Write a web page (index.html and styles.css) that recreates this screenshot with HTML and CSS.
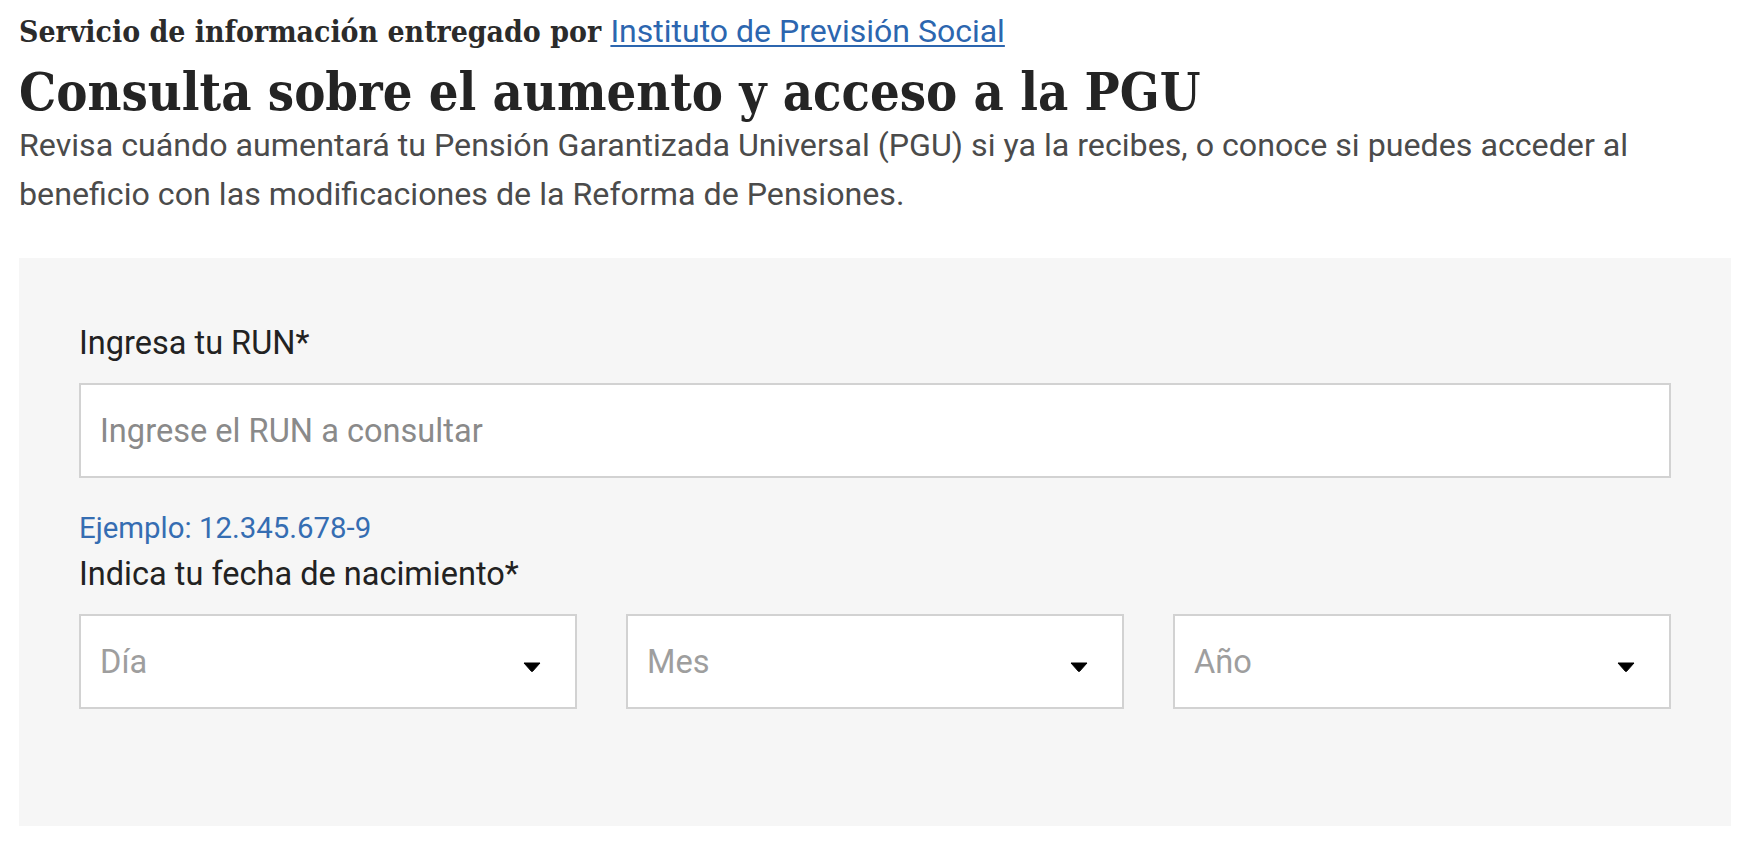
FILE: index.html
```html
<!DOCTYPE html>
<html lang="es">
<head>
<meta charset="utf-8">
<title>Consulta sobre el aumento y acceso a la PGU</title>
<link rel="stylesheet" href="styles.css">
</head>
<body>
<main class="page">
  <p class="provider">Servicio de información entregado por <a class="provider-link" href="#">Instituto de Previsión Social</a></p>
  <h1 class="title">Consulta sobre el aumento y acceso a la PGU</h1>
  <p class="lead">Revisa cuándo aumentará tu Pensión Garantizada Universal (PGU) si ya la recibes, o conoce si puedes acceder al beneficio con las modificaciones de la Reforma de Pensiones.</p>

  <form class="panel">
    <label class="label" for="run">Ingresa tu RUN*</label>
    <input class="field" id="run" type="text" placeholder="Ingrese el RUN a consultar">
    <p class="help">Ejemplo: 12.345.678-9</p>
    <p class="label label-date">Indica tu fecha de nacimiento*</p>
    <div class="date-row">
      <div class="select-wrap">
        <select class="select" aria-label="Día"><option selected>Día</option></select>
        <svg class="caret" viewBox="0 0 18 10" width="18" height="10" aria-hidden="true"><path d="M1 1 H17 L9.6 9.3 Q9 9.9 8.4 9.3 Z" fill="#000" stroke="#000" stroke-width="1" stroke-linejoin="round"/></svg>
      </div>
      <div class="select-wrap">
        <select class="select" aria-label="Mes"><option selected>Mes</option></select>
        <svg class="caret" viewBox="0 0 18 10" width="18" height="10" aria-hidden="true"><path d="M1 1 H17 L9.6 9.3 Q9 9.9 8.4 9.3 Z" fill="#000" stroke="#000" stroke-width="1" stroke-linejoin="round"/></svg>
      </div>
      <div class="select-wrap">
        <select class="select" aria-label="Año"><option selected>Año</option></select>
        <svg class="caret" viewBox="0 0 18 10" width="18" height="10" aria-hidden="true"><path d="M1 1 H17 L9.6 9.3 Q9 9.9 8.4 9.3 Z" fill="#000" stroke="#000" stroke-width="1" stroke-linejoin="round"/></svg>
      </div>
    </div>
  </form>
</main>
</body>
</html>
```

FILE: styles.css
```css
html, body {
  margin: 0;
  padding: 0;
  background: #ffffff;
}

.page {
  padding: 11px 23px 0 19px;
  font-family: Roboto, "Liberation Sans", sans-serif;
}

.provider {
  margin: 0;
  font-family: "DejaVu Serif", "Liberation Serif", serif;
  font-stretch: condensed;
  font-weight: bold;
  font-size: 29.9px;
  line-height: 40px;
  color: #2b2b2b;
}

.provider-link {
  font-family: Roboto, "Liberation Sans", sans-serif;
  font-stretch: normal;
  font-weight: 400;
  font-size: 32px;
  color: #2c66af;
  text-decoration: underline;
  text-decoration-thickness: 2px;
  text-underline-offset: 3px;
}

.title {
  margin: 10px 0 0;
  font-family: "DejaVu Serif", "Liberation Serif", serif;
  font-stretch: condensed;
  font-weight: bold;
  font-size: 52px;
  line-height: 60px;
  color: #242424;
}

.lead {
  margin: -1px 0 0;
  font-size: 32.2px;
  line-height: 49px;
  color: #4b4b4b;
}

.panel {
  margin-top: 39px;
  background: #f6f6f6;
  padding: 65px 60px 117px;
  display: flex;
  flex-direction: column;
}

.label {
  display: block;
  margin: 0;
  font-size: 32.5px;
  line-height: 40px;
  color: #222222;
}

.field {
  margin-top: 20px;
  box-sizing: border-box;
  height: 95px;
  width: 100%;
  border: 2px solid #d2d2d2;
  border-radius: 0;
  background: #ffffff;
  padding: 0 19px;
  font-family: Roboto, "Liberation Sans", sans-serif;
  font-size: 32.6px;
  color: #222222;
  outline: none;
}

.field::placeholder {
  color: #8a8a8a;
  opacity: 1;
}

.help {
  margin: 32px 0 0;
  font-size: 29.4px;
  line-height: 36px;
  color: #356db2;
}

.label-date {
  margin-top: 8px;
}

.date-row {
  margin-top: 20px;
  display: grid;
  grid-template-columns: repeat(3, 1fr);
  gap: 49px;
}

.select-wrap {
  position: relative;
}

.select {
  appearance: none;
  -webkit-appearance: none;
  box-sizing: border-box;
  width: 100%;
  height: 95px;
  border: 2px solid #d2d2d2;
  border-radius: 0;
  background: #ffffff;
  padding: 0 19px;
  font-family: Roboto, "Liberation Sans", sans-serif;
  font-size: 32.6px;
  color: #9e9e9e;
  outline: none;
}

.caret {
  position: absolute;
  right: 36px;
  top: 48px;
  display: block;
}
```
